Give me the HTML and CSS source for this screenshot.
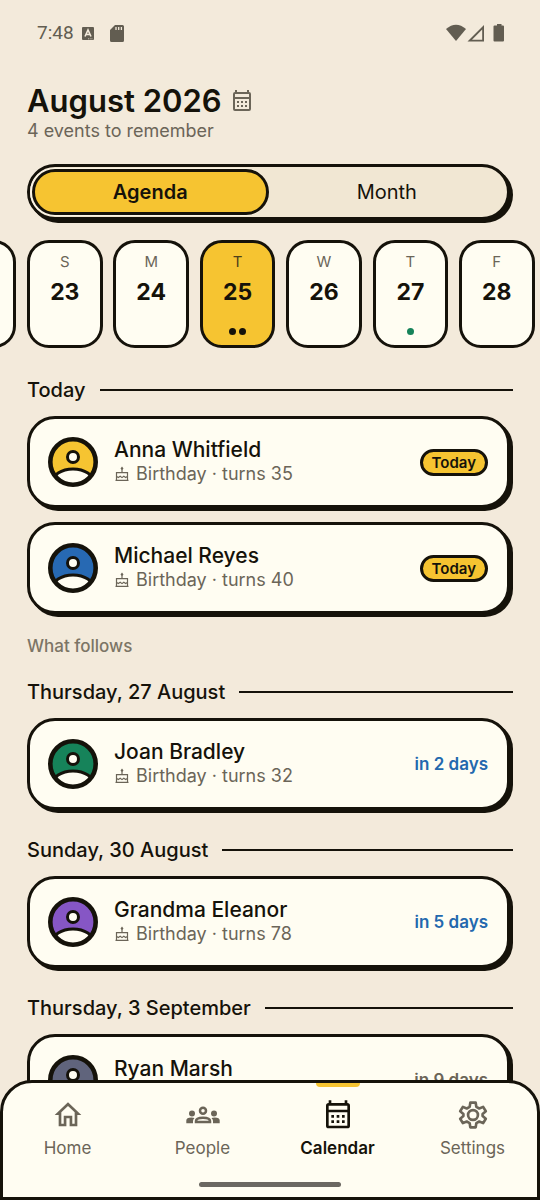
FILE: index.html
```html
<!DOCTYPE html>
<html lang="en">
<head>
<meta charset="utf-8">
<meta name="viewport" content="width=device-width, initial-scale=1">
<title>Calendar</title>
<link rel="stylesheet" href="styles.css">
</head>
<body>
<svg class="defs" aria-hidden="true">
  <clipPath id="avatar-clip"><circle cx="25" cy="25" r="23"/></clipPath>
  <symbol id="calendar" viewBox="0 0 24 24">
    <path fill="currentColor" fill-rule="evenodd" d="M5 3V1h2v2h10V1h2v2a2 2 0 0 1 2 2v15a2 2 0 0 1-2 2H5a2 2 0 0 1-2-2V5a2 2 0 0 1 2-2zm0 2v3h14V5zm0 5v10h14V10z"/>
    <path fill="currentColor" d="M7 12h2v2H7zm4 0h2v2h-2zm4 0h2v2h-2zm-8 4h2v2H7zm4 0h2v2h-2zm4 0h2v2h-2z"/>
  </symbol>
  <symbol id="cake" viewBox="0 0 16 16">
    <path fill="none" stroke="currentColor" stroke-width="1.200" d="M2.500 14.400V6.600h11v7.800M1.500 14.400h13M8 6.600V3M2.500 10.200l1.800 1.400 1.900-1.400L8 11.600l1.800-1.400 1.900 1.400 1.800-1.400"/>
    <path fill="currentColor" d="M8 .5l1.500 2L8 4 6.500 2.500z"/>
  </symbol>
  <symbol id="avatar" viewBox="0 0 50 50">
    <g clip-path="url(#avatar-clip)">
      <circle cx="25" cy="25" r="23" fill="currentColor"/>
      <ellipse cx="25" cy="46" rx="21" ry="14" fill="#fffdf2" stroke="#15120a" stroke-width="3"/>
    </g>
    <circle cx="25" cy="20" r="5.500" fill="#fffdf2" stroke="#15120a" stroke-width="3"/>
    <circle cx="25" cy="25" r="22.700" fill="none" stroke="#15120a" stroke-width="4.600"/>
  </symbol>
</svg>
<div class="app">
  <header class="status">
    <span class="clock">7:48</span>
    <svg class="status-a" viewBox="0 0 12 13"><rect width="12" height="13" rx="1" fill="#625d51"/><path d="M3 9.500 6 3l3 6.500M4.200 7.500h3.600" fill="none" stroke="#f3eadb" stroke-width="1.600"/><path d="M6 11.800h5" stroke="#f3eadb" stroke-width=".7" stroke-dasharray="1 .7"/></svg>
    <svg class="status-sd" viewBox="0 0 14 17"><path d="M5 0h7.500A1.500 1.500 0 0 1 14 1.500v14a1.500 1.500 0 0 1-1.500 1.500h-11A1.500 1.500 0 0 1 0 15.500V5z" fill="#625d51"/><path d="M6 2v3M8.700 2v3M11.400 2v3" stroke="#f3eadb" stroke-width="1.300"/></svg>
    <svg class="status-net" viewBox="0 0 58 18"><g fill="#625d51"><path d="M0 5Q10-3.500 20 5L10 17z"/><path fill-rule="evenodd" d="M38 1v16.500H21.500zM36.200 5.600 26 15.800h10.200z"/><path d="M51 0h4.500v1.500H57A1 1 0 0 1 58 2.500v14A1 1 0 0 1 57 17.500h-8.500a1 1 0 0 1-1-1v-14a1 1 0 0 1 1-1H51z"/></g></svg>
  </header>
  <main class="content">
    <div class="title"><h1>August 2026</h1><svg class="title-icon"><use href="#calendar"/></svg></div>
    <p class="subtitle">4 events to remember</p>
    <div class="segmented">
      <button class="segment segment-on" type="button">Agenda</button>
      <button class="segment" type="button">Month</button>
    </div>
    <div class="days">
      <button class="day" type="button" aria-label="Saturday 22"></button>
      <button class="day" type="button"><span class="weekday">S</span><span class="date">23</span></button>
      <button class="day" type="button"><span class="weekday">M</span><span class="date">24</span></button>
      <button class="day day-on" type="button"><span class="weekday">T</span><span class="date">25</span><span class="dots"><i class="dot"></i><i class="dot"></i></span></button>
      <button class="day" type="button"><span class="weekday">W</span><span class="date">26</span></button>
      <button class="day" type="button"><span class="weekday">T</span><span class="date">27</span><span class="dots"><i class="dot dot-green"></i></span></button>
      <button class="day" type="button"><span class="weekday">F</span><span class="date">28</span></button>
    </div>
    <h2 class="section">Today</h2>
    <div class="cards">
      <article class="card"><svg class="avatar yellow"><use href="#avatar"/></svg><div class="person"><h3>Anna Whitfield</h3><p><svg class="cake"><use href="#cake"/></svg>Birthday · turns 35</p></div><span class="badge">Today</span></article>
      <article class="card"><svg class="avatar blue"><use href="#avatar"/></svg><div class="person"><h3>Michael Reyes</h3><p><svg class="cake"><use href="#cake"/></svg>Birthday · turns 40</p></div><span class="badge">Today</span></article>
    </div>
    <p class="follows">What follows</p>
    <h2 class="section">Thursday, 27 August</h2>
    <article class="card"><svg class="avatar green"><use href="#avatar"/></svg><div class="person"><h3>Joan Bradley</h3><p><svg class="cake"><use href="#cake"/></svg>Birthday · turns 32</p></div><span class="due">in 2 days</span></article>
    <h2 class="section">Sunday, 30 August</h2>
    <article class="card"><svg class="avatar purple"><use href="#avatar"/></svg><div class="person"><h3>Grandma Eleanor</h3><p><svg class="cake"><use href="#cake"/></svg>Birthday · turns 78</p></div><span class="due">in 5 days</span></article>
    <h2 class="section">Thursday, 3 September</h2>
    <article class="card"><svg class="avatar slate"><use href="#avatar"/></svg><div class="person"><h3>Ryan Marsh</h3></div><span class="due due-later">in 9 days</span></article>
  </main>
  <nav class="tabbar">
    <div class="tabs">
      <a class="tab" href="#home"><svg viewBox="0 0 24 24"><path fill="currentColor" fill-rule="evenodd" d="M12 2.500 2 12h3v8.500h5.800v-6h2.400v6H19V12h3zm0 2.700 5 4.700v8.600h-1.800v-6H8.800v6H7V9.900z"/></svg>Home</a>
      <a class="tab" href="#people"><svg class="wide" viewBox="0 0 34 20"><g fill="currentColor"><circle cx="6" cy="8.500" r="3"/><circle cx="28" cy="8.500" r="3"/><path d="M.3 18.300v-2.800q0-3 5-3 2 0 3.200.5-1.500 1.500-1.500 3v2.300zM33.700 18.300v-2.800q0-3-5-3-2 0-3.200.5 1.500 1.500 1.500 3v2.300z"/></g><g fill="none" stroke="currentColor" stroke-width="2.500"><circle cx="17" cy="5.800" r="3"/><path d="M10 17v-1q0-3.300 7-3.300t7 3.300v1z"/></g></svg>People</a>
      <a class="tab tab-on" href="#calendar-tab" aria-current="page"><svg><use href="#calendar"/></svg>Calendar</a>
      <a class="tab" href="#settings"><svg viewBox="0 0 24 24"><g fill="none" stroke="currentColor" stroke-width="2" stroke-linejoin="round"><path d="M10 2.700h4l.5 3.200 2.200 1.200 2.900-1.200 2 3.300-2.400 2v1.600l2.400 2-2 3.300-2.900-1.200-2.200 1.200-.5 3.200h-4l-.5-3.200-2.200-1.200-2.900 1.200-2-3.300 2.400-2v-1.600l-2.400-2 2-3.300 2.900 1.200 2.200-1.200z"/><circle cx="12" cy="12" r="3.700"/></g></svg>Settings</a>
    </div>
    <div class="home-bar"></div>
  </nav>
</div>
</body>
</html>
```
FILE: styles.css
```css
* { box-sizing: border-box; }
:root { --ink: #15120a; --muted: #6b6558; --paper: #fffdf2; --sand: #f3eadb; --yellow: #f6c431; }
body { margin: 0; background: var(--sand); color: var(--ink); font-family: Inter, "Liberation Sans", sans-serif; }
h1, h2, h3, p { margin: 0; }
button { font: inherit; color: inherit; cursor: pointer; }
svg { display: block; flex: none; }
.defs { position: absolute; width: 0; height: 0; }
.app { position: relative; display: flex; flex-direction: column; height: 100vh; overflow: hidden; }

.status { display: flex; align-items: center; height: 66px; padding: 0 36px 0 37px; flex: none; color: #625d51; }
.clock { font-family: Roboto, sans-serif; font-size: 19px; line-height: 24px; margin-right: 8px; }
.status-a { width: 12px; height: 13px; margin-right: 16px; }
.status-sd { width: 14px; height: 17px; }
.status-net { width: 58px; height: 18px; margin-left: auto; }

.content { flex: 1; min-height: 0; overflow-y: auto; scrollbar-width: none; padding: 17px 0 120px; }
.title { display: flex; align-items: center; gap: 8px; padding: 0 27px; }
h1 { font-size: 31px; line-height: 36px; font-weight: 600; }
.title-icon { width: 24px; height: 24px; color: var(--muted); }
.subtitle { padding: 0 27px; font-size: 18px; line-height: 24px; color: var(--muted); }

.segmented { display: flex; height: 56px; margin: 21px 30px 0 27px; padding: 2px; border: 3px solid var(--ink); border-radius: 28px; background: #f1e7d3; box-shadow: 3px 3px 0 var(--ink); }
.segment { flex: 1; padding: 0; border: 3px solid transparent; border-radius: 23px; background: none; font-size: 20px; line-height: 24px; }
.segment-on { border-color: var(--ink); background: var(--yellow); font-weight: 600; box-shadow: -1px 0 0 1px #fbf4e4; }

.days { display: grid; grid-auto-flow: column; grid-auto-columns: 14%; column-gap: 2%; margin: 20px 0 30px -11%; width: 100%; }
.day { display: flex; flex-direction: column; align-items: center; height: 108px; padding: 9px 0 0; border: 3px solid var(--ink); border-radius: 22px; background: var(--paper); }
.day-on { background: var(--yellow); }
.weekday { font-size: 15px; line-height: 20px; color: var(--muted); }
.day-on .weekday { color: #4d401b; }
.date { margin-top: 6px; font-size: 23px; line-height: 28px; font-weight: 700; }
.dots { display: flex; gap: 3px; margin-top: 22px; }
.dot { width: 7px; height: 7px; border-radius: 50%; background: var(--ink); }
.dot-green { background: #16835a; }

.section { display: flex; align-items: center; gap: 14px; margin: 28px 27px 14px; font-size: 20px; line-height: 24px; font-weight: 500; }
.section::after { content: ""; flex: 1; height: 2px; background: var(--ink); }
.cards { display: grid; gap: 14px; }
.card { display: flex; align-items: center; height: 92px; margin: 0 30px 0 27px; padding: 0 19px 0 18px; border: 3px solid var(--ink); border-radius: 28px; background: var(--paper); box-shadow: 3px 3px 0 var(--ink); }
.avatar { width: 50px; height: 50px; margin-right: 16px; }
.yellow { color: var(--yellow); }
.blue { color: #2769b3; }
.green { color: #16835a; }
.purple { color: #8656c5; }
.slate { color: #60647c; }
.person { flex: 1; min-height: 46px; }
h3 { font-size: 21px; line-height: 24px; font-weight: 500; }
.person p { display: flex; align-items: center; font-size: 18px; line-height: 24px; color: var(--muted); }
.cake { width: 16px; height: 16px; margin-right: 6px; }
.badge { padding: 0 9px; border: 3px solid var(--ink); border-radius: 14px; background: var(--yellow); font-size: 15px; line-height: 21px; font-weight: 600; }
.due { font-size: 17px; line-height: 24px; font-weight: 600; color: #2368ae; }
.due-later { color: var(--muted); }
.follows { margin: 22px 27px 24px; font-size: 17px; line-height: 20px; font-weight: 500; color: #7c7566; }
.follows + .section { margin-top: 24px; }

.tabbar { position: absolute; inset: auto 0 0; height: 120px; border: 3px solid var(--ink); border-radius: 32px 32px 0 0; background: var(--paper); }
.tabs { display: grid; grid-template-columns: repeat(4, 1fr); margin: 0 -3px; }
.tab { position: relative; display: flex; flex-direction: column; align-items: center; gap: 6px; padding-top: 16px; font-size: 17px; line-height: 22px; color: var(--muted); text-decoration: none; }
.tab svg { width: 32px; height: 32px; }
.tab svg.wide { width: 34px; }
.tab-on { color: var(--ink); font-weight: 600; }
.tab-on::before { content: ""; position: absolute; top: 0; width: 44px; height: 4px; border-radius: 0 0 4px 4px; background: var(--yellow); }
.home-bar { width: 142px; height: 5px; margin: 23px auto 0; border-radius: 3px; background: #6b6862; }
```
